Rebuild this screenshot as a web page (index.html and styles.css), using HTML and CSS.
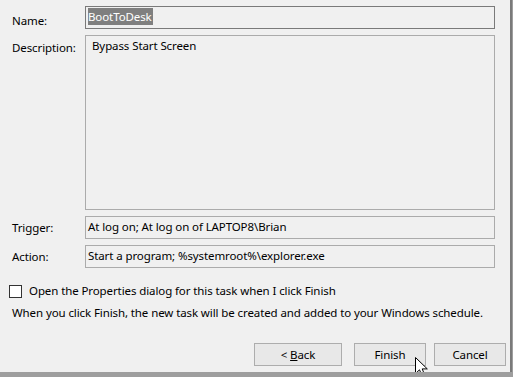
FILE: index.html
```html
<!DOCTYPE html>
<html lang="en">
  <head>
    <meta charset="UTF-8" />
    <title>Create Basic Task Wizard - Finish</title>
    <link rel="stylesheet" href="styles.css">
  </head>
  <body>
    <div class="dialog">
      <div class="fields">
        <div class="label label-name">Name:</div>
        <div class="box box-name"><span class="selected">BootToDesk</span></div>

        <div class="label label-desc">Description:</div>
        <div class="box box-desc">Bypass Start Screen</div>

        <div class="label">Trigger:</div>
        <div class="box">At log on; At log on of LAPTOP8\Brian</div>

        <div class="label">Action:</div>
        <div class="box">Start a program; %systemroot%\explorer.exe</div>
      </div>

      <label class="check-row">
        <span class="checkbox"></span>
        Open the Properties dialog for this task when I click Finish
      </label>
      <p class="note">When you click Finish, the new task will be created and added to your Windows schedule.</p>

      <div class="buttons">
        <button class="btn btn-back">&lt; <u>B</u>ack</button>
        <button class="btn btn-finish">Finish</button>
        <button class="btn btn-cancel">Cancel</button>
      </div>

      <svg class="cursor" width="13" height="20" viewBox="0 0 13 20">
        <path d="M0.5 0.5 L0.5 16.5 L4.5 12.8 L7 18.8 L9.6 17.7 L7.2 11.9 L12.3 11.9 Z" fill="#fff" stroke="#000" stroke-width="1" stroke-linejoin="miter" />
      </svg>
    </div>
  </body>
</html>
```

FILE: styles.css
```css
body {
  margin: 0;
  background-color: #9e9e9e;
  font-family: "Noto Sans", "Open Sans", sans-serif;
  font-size: 11.5px;
  letter-spacing: -0.1px;
  color: #000;
}

.dialog {
  position: relative;
  display: flex;
  flex-direction: column;
  box-sizing: border-box;
  width: 512px;
  height: 372px;
  padding-bottom: 6px;
  background-color: #f0f0f0;
  border-right: 2px solid #7a7a7a;
  overflow: hidden;
}

.fields {
  display: grid;
  grid-template-columns: 85px 410px;
  row-gap: 6px;
  padding-top: 6px;
}

.label {
  padding-left: 12px;
  line-height: 16px;
  align-self: center;
}

.label-name {
  align-self: start;
  padding-top: 7px;
}

.label-desc {
  align-self: start;
  padding-top: 5px;
}

.box {
  box-sizing: border-box;
  height: 23px;
  border: 1px solid #ababab;
  padding: 2px 0 0 2px;
  line-height: 16px;
  white-space: nowrap;
}

.box-name {
  border-color: #7a7a7a;
  padding: 1px 0 0 2px;
}

.selected {
  display: inline-block;
  background-color: #7f7f7f;
  color: #fff;
  line-height: 17px;
  padding-right: 1px;
}

.box-desc {
  height: 175px;
  padding: 2px 0 0 6px;
}

.check-row {
  display: flex;
  align-items: center;
  gap: 7px;
  margin: 15px 0 0 9px;
  line-height: 16px;
}

.checkbox {
  box-sizing: border-box;
  width: 13px;
  height: 13px;
  border: 1px solid #333;
  background-color: #fff;
}

.note {
  margin: 6px 0 0 12px;
  line-height: 16px;
  white-space: nowrap;
}

.buttons {
  display: flex;
  justify-content: flex-end;
  margin-top: auto;
  padding-right: 4px;
}

.btn {
  box-sizing: border-box;
  height: 23px;
  padding: 0;
  border: 1px solid #adadad;
  background-color: #e8e8e8;
  font-family: inherit;
  font-size: 11.5px;
  letter-spacing: -0.1px;
  color: #000;
}

.btn-back {
  width: 88px;
}

.btn-finish {
  width: 72px;
  margin-left: 12px;
}

.btn-cancel {
  width: 72px;
  margin-left: 8px;
}

.cursor {
  position: absolute;
  left: 415px;
  top: 357px;
}
```
